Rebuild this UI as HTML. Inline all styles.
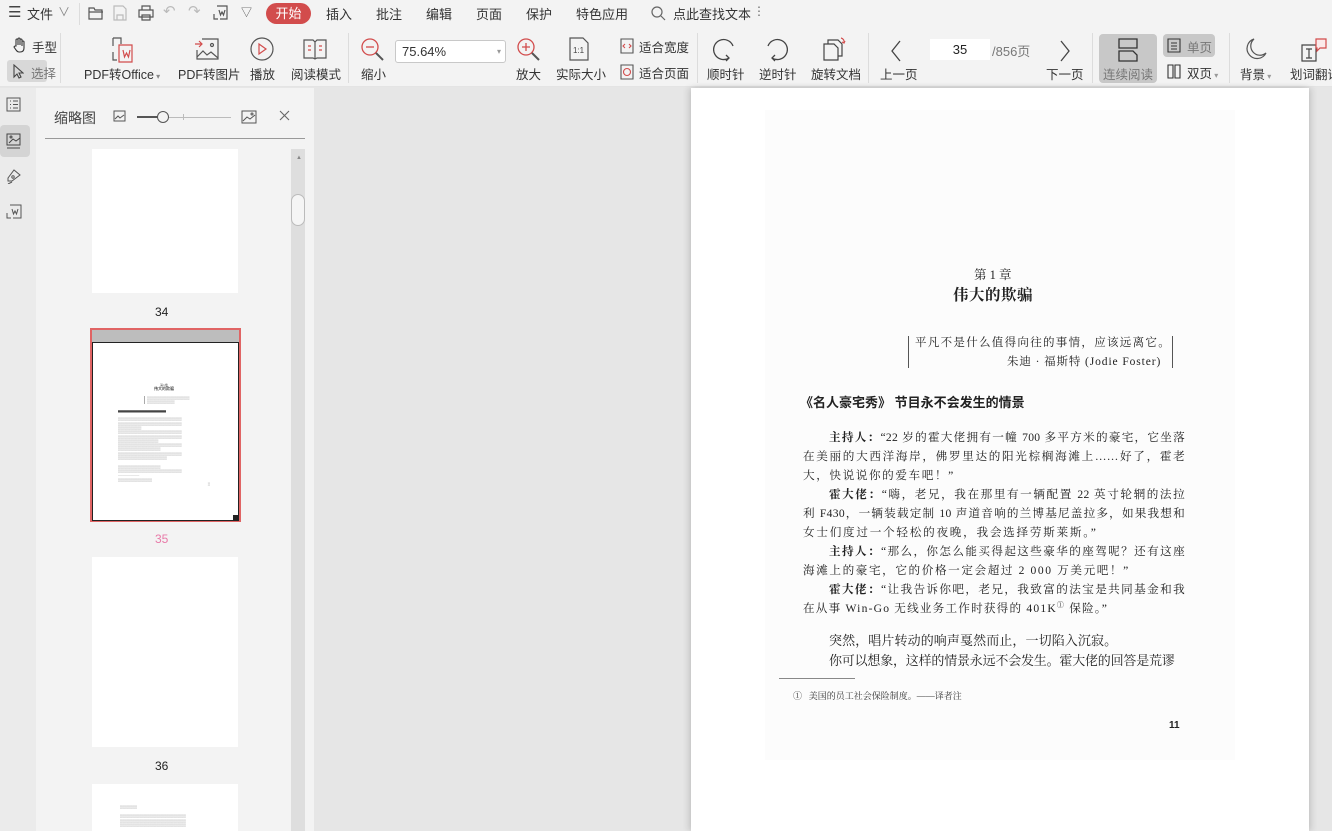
<!DOCTYPE html>
<html style="overflow:hidden"><head><meta charset="utf-8">
<style>
*{margin:0;padding:0;box-sizing:border-box}
html,body{width:1332px;height:831px;overflow:hidden}
body{background:#e6e6e6;font-family:"Liberation Sans","Noto Sans CJK SC",sans-serif;color:#333;position:relative}
.a{position:absolute;white-space:nowrap}
#top{position:absolute;left:0;top:0;width:1332px;height:87px;background:#f3f3f3;border-bottom:1px solid #e4e4e4}
.t{font-size:13px;color:#333}
.lbl{font-size:12.5px;color:#333}
svg{position:absolute}
.sep{position:absolute;width:1px;background:#dcdcdc}
.serif{font-family:"Liberation Serif","Noto Serif CJK SC",serif;color:#222}
.ln{position:absolute;left:803px;width:382px;font-size:11.6px;text-align:justify;text-align-last:justify;white-space:nowrap;letter-spacing:0.3px}
</style></head><body>
<div id="top">
 <div class="a" style="left:8px;top:3px;font-size:15px;color:#444">☰</div>
 <div class="a t" style="left:27px;top:4px">文件</div>
 <div class="a" style="left:58px;top:3px;font-size:12px;color:#888">∨</div>
 <div class="sep" style="left:79px;top:3px;height:22px"></div>
 <svg style="left:88px;top:6px" width="16" height="14" viewBox="0 0 16 14" fill="none" stroke="#555" stroke-width="1.2"><path d="M1 2h5l1 2h7v9H1z M1 6h14"/></svg>
 <svg style="left:113px;top:5px" width="14" height="16" viewBox="0 0 14 16" fill="none" stroke="#bbb" stroke-width="1.2"><path d="M1 1h9l3 3v11H1z M4 10h6v5H4z"/></svg>
 <svg style="left:138px;top:5px" width="16" height="16" viewBox="0 0 16 16" fill="none" stroke="#555" stroke-width="1.2"><path d="M4 5V1h8v4 M1 5h14v7H1z M4 10h8v5H4z"/></svg>
 <div class="a" style="left:163px;top:2px;font-size:15px;color:#bbb">↶</div>
 <div class="a" style="left:188px;top:2px;font-size:15px;color:#bbb">↷</div>
 <svg style="left:213px;top:5px" width="16" height="16" viewBox="0 0 16 16" fill="none" stroke="#555" stroke-width="1.2"><path d="M4 1h10v13H7 M6 5l1.5 5 1.5-3 1.5 3L12 5 M1 9v5h4"/></svg>
 <div class="a" style="left:241px;top:4px;font-size:11px;color:#555">▽</div>
 <div class="a" style="left:266px;top:3px;width:45px;height:21px;background:#d24c4c;border-radius:11px;color:#fff;font-size:13px;text-align:center;line-height:21px">开始</div>
 <div class="a t" style="left:326px;top:4px">插入</div>
 <div class="a t" style="left:376px;top:4px">批注</div>
 <div class="a t" style="left:426px;top:4px">编辑</div>
 <div class="a t" style="left:476px;top:4px">页面</div>
 <div class="a t" style="left:526px;top:4px">保护</div>
 <div class="a t" style="left:576px;top:4px">特色应用</div>
 <svg style="left:651px;top:6px" width="15" height="15" viewBox="0 0 15 15" fill="none" stroke="#666" stroke-width="1.2"><circle cx="6" cy="6" r="5"/><path d="M10 10l4 4"/></svg>
 <div class="a t" style="left:673px;top:4px">点此查找文本</div>
 <div class="a" style="left:753px;top:4px;font-size:12px;color:#666">⋮</div>
 <svg style="left:12px;top:37px" width="16" height="16" viewBox="0 0 16 16" fill="none" stroke="#333" stroke-width="1.1"><path d="M4 9V3a1 1 0 0 1 2 0v5V2a1 1 0 0 1 2 0v6V3a1 1 0 0 1 2 0v6V5a1 1 0 0 1 2 0v6c0 3-2 4-4 4H7c-2 0-3-2-5-5l1-1z"/></svg>
 <div class="a lbl" style="left:32px;top:37px">手型</div>
 <div class="a" style="left:7px;top:60px;width:40px;height:22px;background:#d8d8d8;border-radius:3px"></div>
 <svg style="left:13px;top:64px" width="11" height="15" viewBox="0 0 11 15" fill="none" stroke="#444" stroke-width="1.1"><path d="M1 1v12l3-3 2 4 2-1-2-4h4z"/></svg>
 <div class="a lbl" style="left:31px;top:63px;color:#777">选择</div>
 <div class="sep" style="left:60px;top:33px;height:50px"></div>
 <svg style="left:107px;top:36px" width="30" height="28" viewBox="0 0 30 28" fill="none" stroke-width="1.2"><path d="M6 2h8v6 M6 2v8 M6 16v8h4" stroke="#555"/><path d="M12 9h13v17H12z M16 14l1.5 7 2-4 2 4 1.5-7" stroke="#d24c4c"/></svg>
 <div class="a lbl" style="left:84px;top:64px">PDF转Office<span style="font-size:8px;color:#888"> ▾</span></div>
 <svg style="left:194px;top:37px" width="26" height="24" viewBox="0 0 26 24" fill="none" stroke="#555" stroke-width="1.2"><path d="M8 2h16v20H3v-9"/><circle cx="18" cy="8" r="1.5"/><path d="M3 20l6-6 4 4 4-3 7 6"/><path d="M1 7h7 M5 4l3 3-3 3" stroke="#d24c4c"/></svg>
 <div class="a lbl" style="left:178px;top:64px">PDF转图片</div>
 <svg style="left:250px;top:37px" width="24" height="24" viewBox="0 0 24 24" fill="none" stroke="#d24c4c" stroke-width="1.2"><circle cx="12" cy="12" r="11" stroke="#555"/><path d="M9 7l7 5-7 5z"/></svg>
 <div class="a lbl" style="left:250px;top:64px">播放</div>
 <svg style="left:303px;top:38px" width="24" height="22" viewBox="0 0 24 22" fill="none" stroke="#555" stroke-width="1.2"><path d="M1 2h9l2 2 2-2h9v18H14l-2 1-2-1H1z M12 4v17"/><path d="M5 8h3M5 12h3M16 8h3M16 12h3" stroke="#d24c4c"/></svg>
 <div class="a lbl" style="left:291px;top:64px">阅读模式</div>
 <div class="sep" style="left:348px;top:33px;height:50px"></div>
 <svg style="left:361px;top:38px" width="24" height="24" viewBox="0 0 24 24" fill="none" stroke-width="1.3"><circle cx="9" cy="9" r="8" stroke="#d24c4c"/><path d="M5 9h8" stroke="#d24c4c"/><path d="M15 15l7 7" stroke="#555" stroke-width="2"/></svg>
 <div class="a lbl" style="left:361px;top:64px">缩小</div>
 <div class="a" style="left:395px;top:40px;width:111px;height:23px;background:#fff;border:1px solid #c8c8c8;border-radius:3px;font-size:13px;line-height:21px;padding-left:6px;color:#333">75.64%<span style="position:absolute;right:4px;font-size:8px;color:#999">▾</span></div>
 <svg style="left:517px;top:38px" width="24" height="24" viewBox="0 0 24 24" fill="none" stroke-width="1.3"><circle cx="9" cy="9" r="8" stroke="#d24c4c"/><path d="M5 9h8M9 5v8" stroke="#d24c4c"/><path d="M15 15l7 7" stroke="#555" stroke-width="2"/></svg>
 <div class="a lbl" style="left:516px;top:64px">放大</div>
 <svg style="left:569px;top:37px" width="20" height="24" viewBox="0 0 20 24" fill="none" stroke="#555" stroke-width="1.2"><path d="M1 1h13l5 5v17H1z"/><text x="4" y="16" font-size="8" fill="#444" stroke="none" font-family="Liberation Sans">1:1</text></svg>
 <div class="a lbl" style="left:556px;top:64px">实际大小</div>
 <svg style="left:620px;top:38px" width="14" height="16" viewBox="0 0 14 16" fill="none" stroke="#555" stroke-width="1.1"><path d="M1 1h12v14H1z"/><path d="M5 6l-2 2 2 2M9 6l2 2-2 2" stroke="#d24c4c"/></svg>
 <div class="a lbl" style="left:639px;top:37px">适合宽度</div>
 <svg style="left:620px;top:64px" width="14" height="16" viewBox="0 0 14 16" fill="none" stroke="#555" stroke-width="1.1"><path d="M1 1h12v14H1z"/><circle cx="7" cy="8" r="3.5" stroke="#d24c4c"/></svg>
 <div class="a lbl" style="left:639px;top:63px">适合页面</div>
 <div class="sep" style="left:697px;top:33px;height:50px"></div>
 <svg style="left:713px;top:38px" width="24" height="24" viewBox="0 0 24 24" fill="none" stroke="#444" stroke-width="1.3"><path d="M16 20A10 10 0 1 1 20 8"/><path d="M13 17l3 3-3 3"/></svg>
 <div class="a lbl" style="left:707px;top:64px">顺时针</div>
 <svg style="left:764px;top:38px" width="24" height="24" viewBox="0 0 24 24" fill="none" stroke="#444" stroke-width="1.3"><path d="M8 20A10 10 0 1 0 4 8"/><path d="M11 17l-3 3 3 3"/></svg>
 <div class="a lbl" style="left:759px;top:64px">逆时针</div>
 <svg style="left:822px;top:36px" width="26" height="26" viewBox="0 0 26 26" fill="none" stroke="#444" stroke-width="1.2"><path d="M2 8h10l4 4v12H2z M6 8V4h10l4 4v12h-4"/><path d="M19 2a4 4 0 0 1 3 5l-2-1M22 7l1-2" stroke="#d24c4c"/></svg>
 <div class="a lbl" style="left:811px;top:64px">旋转文档</div>
 <div class="sep" style="left:868px;top:33px;height:50px"></div>
 <svg style="left:890px;top:40px" width="12" height="22" viewBox="0 0 12 22" fill="none" stroke="#444" stroke-width="1.3"><path d="M10 1L2 11l8 10"/></svg>
 <div class="a lbl" style="left:880px;top:64px">上一页</div>
 <div class="a" style="left:930px;top:39px;width:60px;height:21px;background:#fff;font-size:13px;text-align:center;line-height:21px;color:#222">35</div>
 <div class="a" style="left:992px;top:41px;font-size:13px;color:#777">/856页</div>
 <svg style="left:1059px;top:40px" width="12" height="22" viewBox="0 0 12 22" fill="none" stroke="#444" stroke-width="1.3"><path d="M2 1l8 10-8 10"/></svg>
 <div class="a lbl" style="left:1046px;top:64px">下一页</div>
 <div class="sep" style="left:1092px;top:33px;height:50px"></div>
 <div class="a" style="left:1099px;top:34px;width:58px;height:49px;background:#c8c8c8;border-radius:4px"></div>
 <svg style="left:1118px;top:38px" width="20" height="24" viewBox="0 0 20 24" fill="none" stroke="#333" stroke-width="1.3"><path d="M1 1h18v9H1z M1 13h14l4 4v6H1z"/></svg>
 <div class="a lbl" style="left:1103px;top:64px;color:#777">连续阅读</div>
 <div class="a" style="left:1163px;top:34px;width:52px;height:23px;background:#c8c8c8;border-radius:4px"></div>
 <svg style="left:1167px;top:38px" width="14" height="15" viewBox="0 0 14 15" fill="none" stroke="#333" stroke-width="1.1"><path d="M1 1h12v13H1z M4 5h6M4 8h6M4 11h6"/></svg>
 <div class="a lbl" style="left:1187px;top:37px;color:#777">单页</div>
 <svg style="left:1167px;top:64px" width="14" height="15" viewBox="0 0 14 15" fill="none" stroke="#333" stroke-width="1.1"><path d="M1 1h5v13H1z M8 1h5v13H8z"/></svg>
 <div class="a lbl" style="left:1187px;top:63px">双页<span style="font-size:8px;color:#999"> ▾</span></div>
 <div class="sep" style="left:1229px;top:33px;height:50px"></div>
 <svg style="left:1244px;top:37px" width="24" height="24" viewBox="0 0 24 24" fill="none" stroke="#555" stroke-width="1.2"><path d="M10 2A10 10 0 1 0 22 16 9 9 0 0 1 10 2z"/></svg>
 <div class="a lbl" style="left:1240px;top:64px">背景<span style="font-size:8px;color:#999"> ▾</span></div>
 <svg style="left:1300px;top:37px" width="28" height="26" viewBox="0 0 28 26" fill="none" stroke-width="1.2"><path d="M2 8h14v16H2z M6 12h6M9 12v9M6 21h6" stroke="#444"/><path d="M16 2h10v9h-6l-3 3v-3h-1z" stroke="#d24c4c" fill="#fbeaea"/></svg>
 <div class="a lbl" style="left:1290px;top:64px">划词翻译</div>
</div>

<div class="a" style="left:0;top:88px;width:36px;height:743px;background:#ebebeb"></div>
<svg style="left:6px;top:97px" width="15" height="15" viewBox="0 0 15 15" fill="none" stroke="#555" stroke-width="1"><path d="M1 1h13v13H1z M4 4h1M7 4h5M4 7.5h1M7 7.5h5M4 11h1M7 11h5"/></svg>
<div class="a" style="left:0;top:125px;width:30px;height:32px;background:#d4d4d4;border-radius:4px"></div>
<svg style="left:6px;top:133px" width="15" height="17" viewBox="0 0 15 17" fill="none" stroke="#444" stroke-width="1"><path d="M1 1h13v11H1z M1 15h13 M3 10l4-4 3 2 4-3"/><circle cx="5" cy="4" r="1"/></svg>
<svg style="left:6px;top:168px" width="15" height="16" viewBox="0 0 15 16" fill="none" stroke="#555" stroke-width="1"><path d="M2 10l6-8 6 5-8 6H2z M6 14l-4 2"/><circle cx="7" cy="9" r="1.2"/></svg>
<svg style="left:6px;top:204px" width="16" height="16" viewBox="0 0 16 16" fill="none" stroke="#555" stroke-width="1"><path d="M4 1h11v13H7 M6 5l1.5 5 1.5-3 1.5 3L12 5 M1 9v5h4"/></svg>

<div class="a" style="left:36px;top:88px;width:278px;height:743px;background:#f3f3f3;overflow:hidden">
<div class="a" style="left:18px;top:20px;font-size:14px;color:#444">缩略图</div>
<svg style="left:77px;top:22px" width="13" height="12" viewBox="0 0 13 12" fill="none" stroke="#555" stroke-width="1"><path d="M1 1h11v10H1z M2 9l3-3 2 2 4-3"/></svg>
<div class="a" style="left:101px;top:29px;width:94px;height:1px;background:#bbb"></div>
<div class="a" style="left:101px;top:28px;width:26px;height:1.5px;background:#555"></div>
<div class="a" style="left:121px;top:23px;width:12px;height:12px;border:1.3px solid #555;border-radius:50%;background:#f3f3f3"></div>
<div class="a" style="left:147px;top:26px;width:1px;height:6px;background:#bbb"></div>
<svg style="left:205px;top:22px" width="16" height="14" viewBox="0 0 16 14" fill="none" stroke="#555" stroke-width="1"><path d="M1 1h14v12H1z M2 11l4-4 3 2 5-4"/><circle cx="11" cy="4" r="1"/></svg>
<svg style="left:243px;top:22px" width="11" height="11" viewBox="0 0 11 11" fill="none" stroke="#666" stroke-width="1.1"><path d="M1 1l9 9M10 1L1 10"/></svg>
<div class="a" style="left:9px;top:50px;width:260px;height:1px;background:#999"></div>
<div class="a" style="left:255px;top:61px;width:14px;height:682px;background:#dedede"></div>
<div class="a" style="left:260px;top:67px;font-size:6px;color:#888">▲</div>
<div class="a" style="left:255px;top:106px;width:14px;height:32px;background:#f5f5f5;border:1px solid #bbb;border-radius:7px"></div>

<div class="a" style="left:56px;top:61px;width:146px;height:144px;background:#fff"></div>
<div class="a" style="left:119px;top:217px;font-size:12px;color:#222">34</div>
<div class="a" style="left:54px;top:240px;width:151px;height:194px;border:2px solid #e06464;background:#bdbdbd"></div>
<div class="a" style="left:56px;top:254px;width:147px;height:179px;background:#fff;border:1px solid #222"></div>
<div class="a" style="left:197px;top:427px;width:5px;height:5px;background:#222"></div>
<div style="position:absolute;left:82px;top:295px;width:92px;font-size:3px;line-height:4.3px;color:#999;overflow:hidden">
<div style="text-align:center;color:#555">第1章<br><b style="font-size:4px">伟大的欺骗</b></div><br>
<div style="margin-left:26px;border-left:1px solid #aaa;padding-left:2px">▒▒▒▒▒▒▒▒▒▒▒▒▒▒▒▒▒▒▒▒<br>▒▒▒▒▒▒▒▒▒▒▒▒▒</div><br>
<b style="color:#444">▆▆▆▆▆▆▆▆▆▆▆▆▆▆▆▆</b><br><br>
▒▒▒▒▒▒▒▒▒▒▒▒▒▒▒▒▒▒▒▒▒▒▒▒▒▒▒▒▒▒<br>▒▒▒▒▒▒▒▒▒▒▒▒▒▒▒▒▒▒▒▒▒▒▒▒▒▒▒▒▒▒<br>▒▒▒▒▒▒▒▒▒▒▒<br>▒▒▒▒▒▒▒▒▒▒▒▒▒▒▒▒▒▒▒▒▒▒▒▒▒▒▒▒▒▒<br>▒▒▒▒▒▒▒▒▒▒▒▒▒▒▒▒▒▒▒▒▒▒▒▒▒▒▒▒▒▒<br>▒▒▒▒▒▒▒▒▒▒▒▒▒▒▒▒▒▒▒<br>▒▒▒▒▒▒▒▒▒▒▒▒▒▒▒▒▒▒▒▒▒▒▒▒▒▒▒▒▒▒<br>▒▒▒▒▒▒▒▒▒▒▒▒▒▒▒▒▒▒▒▒<br>▒▒▒▒▒▒▒▒▒▒▒▒▒▒▒▒▒▒▒▒▒▒▒▒▒▒▒▒▒▒<br>▒▒▒▒▒▒▒▒▒▒▒▒▒▒▒▒▒▒▒▒▒▒▒<br><br>▒▒▒▒▒▒▒▒▒▒▒▒▒▒▒▒▒▒▒▒<br>▒▒▒▒▒▒▒▒▒▒▒▒▒▒▒▒▒▒▒▒▒▒▒▒▒▒▒▒▒▒<br>──────────<br>▒▒▒▒▒▒▒▒▒▒▒▒▒▒▒▒<br><div style="text-align:right">▒</div></div>
<div class="a" style="left:119px;top:444px;font-size:12px;color:#e87aa8">35</div>
<div class="a" style="left:56px;top:469px;width:146px;height:190px;background:#fff"></div>
<div class="a" style="left:119px;top:671px;font-size:12px;color:#222">36</div>
<div class="a" style="left:56px;top:696px;width:146px;height:60px;background:#fff"></div>
<div style="position:absolute;left:84px;top:717px;font-size:3px;line-height:4.5px;color:#999">▒▒▒▒▒▒▒▒<br><br>▒▒▒▒▒▒▒▒▒▒▒▒▒▒▒▒▒▒▒▒▒▒▒▒▒▒▒▒▒▒▒<br>▒▒▒▒▒▒▒▒▒▒▒▒▒▒▒▒▒▒▒▒▒▒▒▒▒▒▒▒▒▒▒<br>▒▒▒▒▒▒▒▒▒▒▒▒▒▒▒▒▒▒▒▒▒▒▒▒▒▒▒▒▒▒▒</div>
</div>

<div class="a" style="left:691px;top:88px;width:618px;height:743px;background:#fff;box-shadow:-3px 0 6px rgba(0,0,0,0.12),3px 0 6px rgba(0,0,0,0.12)"></div>
<div class="a" style="left:765px;top:110px;width:470px;height:650px;background:#fcfcfc"></div>

<div class="a serif" style="left:974px;top:265px;font-size:12.5px">第 1 章</div>
<div class="a serif" style="left:953px;top:283px;font-size:15.5px;font-weight:bold;letter-spacing:0.5px">伟大的欺骗</div>
<div class="a" style="left:908px;top:336px;width:1px;height:32px;background:#555"></div>
<div class="a" style="left:1172px;top:336px;width:1px;height:32px;background:#555"></div>
<div class="a serif" style="left:915px;top:334px;font-size:11.5px;letter-spacing:1.3px">平凡不是什么值得向往的事情，应该远离它。</div>
<div class="a serif" style="left:1007px;top:353px;font-size:11.5px;letter-spacing:0.9px">朱迪 · 福斯特 (Jodie Foster)</div>
<div class="a" style="left:800px;top:392px;font-size:13px;font-weight:bold;color:#222">《名人豪宅秀》 节目永不会发生的情景</div>

<div class="serif">
<div class="ln" style="top:429px;left:829px;width:356px"><b>主持人：</b>“22 岁的霍大佬拥有一幢 700 多平方米的豪宅，它坐落</div>
<div class="ln" style="top:448px">在美丽的大西洋海岸，佛罗里达的阳光棕榈海滩上……好了，霍老</div>
<div class="ln" style="top:467px;text-align-last:left;letter-spacing:1.6px">大，快说说你的爱车吧！”</div>
<div class="ln" style="top:486px;left:829px;width:356px"><b>霍大佬：</b>“嗨，老兄，我在那里有一辆配置 22 英寸轮辋的法拉</div>
<div class="ln" style="top:505px">利 F430，一辆装载定制 10 声道音响的兰博基尼盖拉多，如果我想和</div>
<div class="ln" style="top:524px;text-align-last:left;letter-spacing:1.75px">女士们度过一个轻松的夜晚，我会选择劳斯莱斯。”</div>
<div class="ln" style="top:543px;left:829px;width:356px"><b>主持人：</b>“那么，你怎么能买得起这些豪华的座驾呢？还有这座</div>
<div class="ln" style="top:562px;text-align-last:left;letter-spacing:1.6px">海滩上的豪宅，它的价格一定会超过 2 000 万美元吧！”</div>
<div class="ln" style="top:581px;left:829px;width:356px"><b>霍大佬：</b>“让我告诉你吧，老兄，我致富的法宝是共同基金和我</div>
<div class="ln" style="top:600px;text-align-last:left;letter-spacing:1.2px">在从事 Win-Go 无线业务工作时获得的 401K<sup style="font-size:7px">①</sup> 保险。”</div>
</div>
<div class="a serif" style="left:829px;top:630px;font-size:13px;letter-spacing:0.1px">突然，唱片转动的响声戛然而止，一切陷入沉寂。</div>
<div class="a serif" style="left:829px;top:650px;font-size:13px;letter-spacing:-0.2px">你可以想象，这样的情景永远不会发生。霍大佬的回答是荒谬</div>
<div class="a" style="left:779px;top:678px;width:76px;height:1px;background:#888"></div>
<div class="a serif" style="left:793px;top:689px;font-size:9px;color:#333">①&nbsp;&nbsp;&nbsp;美国的员工社会保险制度。——译者注</div>
<div class="a" style="left:1169px;top:720px;font-size:10px;font-weight:bold;color:#222">11</div>
</body></html>
